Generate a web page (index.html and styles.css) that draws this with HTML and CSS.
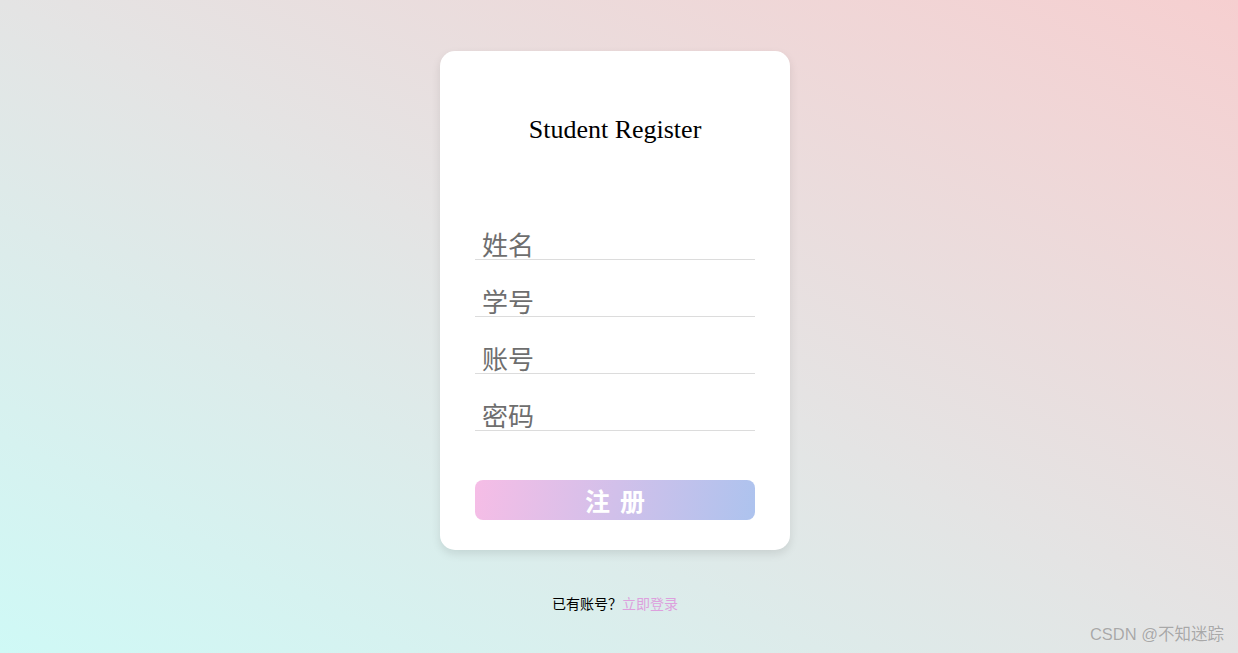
FILE: index.html
```html
<!DOCTYPE html>
<html lang="zh">
<head>
<meta charset="utf-8">
<title>Student Register</title>
<link rel="stylesheet" href="styles.css">
</head>
<body>
<div class="page">
  <div class="card">
    <h2 class="title">Student Register</h2>
    <form class="form">
      <input class="field" type="text" placeholder="姓名">
      <input class="field" type="text" placeholder="学号">
      <input class="field" type="text" placeholder="账号">
      <input class="field" type="password" placeholder="密码">
      <button class="btn" type="button">注册</button>
    </form>
  </div>
  <p class="login">已有账号？<a class="link" href="#">立即登录</a></p>
</div>
<div class="watermark">CSDN @不知迷踪</div>
</body>
</html>
```
FILE: styles.css
```css
html, body {
  margin: 0;
  height: 100%;
}
body {
  background: linear-gradient(to right top, #cff9f6, #e4e4e4 50%, #f6cfd0);
  font-family: "Liberation Sans", "Noto Sans CJK SC", sans-serif;
  overflow: hidden;
}
.page {
  display: flex;
  flex-direction: column;
  align-items: center;
  padding-top: 51px;
  padding-right: 8px;
}
.card {
  width: 350px;
  box-sizing: border-box;
  padding: 64px 35px 30px;
  background: #fff;
  border-radius: 15px;
  box-shadow: 0 4px 10px rgba(0, 0, 0, 0.1);
}
.title {
  margin: 0;
  height: 30px;
  line-height: 30px;
  text-align: center;
  font-family: "Liberation Serif", serif;
  font-weight: normal;
  font-size: 26px;
  color: #000;
}
.form {
  display: flex;
  flex-direction: column;
  gap: 20px;
  margin-top: 78px;
}
.field {
  display: block;
  width: 100%;
  height: 37px;
  box-sizing: border-box;
  border: none;
  border-bottom: 1px solid #dcdcdc;
  outline: none;
  padding: 4px 7px 0;
  font-family: "Noto Sans CJK SC", sans-serif;
  font-size: 26px;
  line-height: 32px;
  color: #333;
  background: transparent;
}
.field::placeholder {
  color: #6e6e6e;
}
.btn {
  margin-top: 29px;
  height: 40px;
  border: none;
  border-radius: 8px;
  background: linear-gradient(100deg, #f6bde6, #adc3ee);
  color: #fff;
  font-family: "Noto Sans CJK SC", sans-serif;
  font-weight: bold;
  font-size: 25px;
  letter-spacing: 10px;
  text-indent: 10px;
  line-height: 40px;
  padding: 0;
}
.login {
  margin: 43px 0 0;
  font-size: 14px;
  line-height: 20px;
  color: #000;
  font-family: "Noto Sans CJK SC", sans-serif;
}
.link {
  color: plum;
  text-decoration: none;
}
.watermark {
  position: absolute;
  right: 14px;
  bottom: 8px;
  font-size: 16.5px;
  color: #a8a8a8;
  font-family: "Liberation Sans", "Noto Sans CJK SC", sans-serif;
  text-shadow: 0 0 1px rgba(255,255,255,0.6);
}
```
